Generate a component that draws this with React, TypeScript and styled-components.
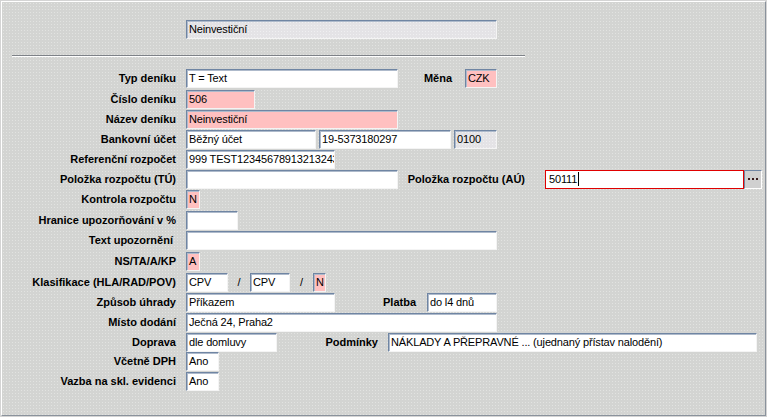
import styled, { createGlobalStyle, css } from 'styled-components';

const GlobalStyle = createGlobalStyle`
  html, body {
    margin: 0;
    padding: 0;
    background: #d4d4d4;
  }
  body {
    font-family: "Liberation Sans", Arial, sans-serif;
    font-size: 11px;
    color: #000;
  }
`;

const dots = css`
  background-color: #d3d4d2;
  background-image: radial-gradient(circle, #e2e3e1 0.7px, transparent 0.8px);
  background-size: 3px 3px;
`;

const Panel = styled.div`
  ${dots};
  margin: 1px;
  width: 765px;
  height: 415px;
  box-sizing: border-box;
  border-top: 1px solid #ffffff;
  border-left: 1px solid #ffffff;
  border-right: 1px solid #8a929c;
  border-bottom: 1px solid #8a929c;
  padding-top: 18px;
`;

const TopRow = styled.div`
  display: flex;
  padding-left: 184px;
`;

const Separator = styled.div`
  margin: 16px 0 12px 10px;
  width: 513px;
  height: 1px;
  background: #7e8288;
  border-bottom: 1px solid #ffffff;
`;

const Row = styled.div<{ $h: number }>`
  display: flex;
  align-items: flex-start;
  height: ${(p) => p.$h}px;
`;

const Label = styled.div`
  width: 174px;
  margin-right: 10px;
  text-align: right;
  font-weight: bold;
  line-height: 19px;
  white-space: nowrap;
`;

const SubLabel = styled.div<{ $w: number; $gap: number }>`
  width: ${(p) => p.$w}px;
  margin-right: ${(p) => p.$gap}px;
  text-align: right;
  font-weight: bold;
  line-height: 19px;
  white-space: nowrap;
`;

type Tone = 'white' | 'pink' | 'gray' | 'error';

const Field = styled.div<{ $w: number; $tone?: Tone }>`
  width: ${(p) => p.$w}px;
  height: 19px;
  box-sizing: border-box;
  padding-left: 2px;
  line-height: 17px;
  letter-spacing: -0.15px;
  white-space: nowrap;
  overflow: hidden;
  flex-shrink: 0;
  border-top: 1px solid #6f85a3;
  border-left: 1px solid #6f85a3;
  border-right: 1px solid #f4f4f4;
  border-bottom: 1px solid #f4f4f4;
  box-shadow: inset 1px 1px 0 #aebacb;
  background: #ffffff;
  ${(p) =>
    p.$tone === 'pink' &&
    css`
      background: #ffc0c0;
    `}
  ${(p) =>
    p.$tone === 'gray' &&
    css`
      background-color: #e4e3e6;
      background-image: radial-gradient(circle, #efeff1 0.7px, transparent 0.8px);
      background-size: 3px 3px;
    `}
  ${(p) =>
    p.$tone === 'error' &&
    css`
      border: 1px solid #e00000;
      box-shadow: none;
      padding-left: 3px;
    `}
`;

const Gap = styled.div<{ $w: number }>`
  width: ${(p) => p.$w}px;
  flex-shrink: 0;
`;

const Slash = styled.div<{ $w: number }>`
  width: ${(p) => p.$w}px;
  text-align: center;
  line-height: 19px;
`;

const Caret = styled.span`
  display: inline-block;
  width: 1px;
  height: 14px;
  background: #000;
  vertical-align: -3px;
  margin-left: 1px;
`;

const PickButton = styled.div`
  width: 18px;
  height: 19px;
  box-sizing: border-box;
  display: flex;
  align-items: center;
  justify-content: center;
  background: #d0d0d0;
  border-top: 1px solid #6f85a3;
  border-left: 1px solid #6f85a3;
  border-right: 1px solid #ffffff;
  border-bottom: 1px solid #ffffff;
`;

function Dots() {
  return (
    <svg width="10" height="3" viewBox="0 0 10 3">
      <rect x="0" y="0" width="2" height="2" fill="#3a1c1c" />
      <rect x="4" y="0" width="2" height="2" fill="#3a1c1c" />
      <rect x="8" y="0" width="2" height="2" fill="#3a1c1c" />
    </svg>
  );
}

export default function App() {
  return (
    <>
      <GlobalStyle />
      <Panel>
        <TopRow>
          <Field $w={311} $tone="gray">Neinvestiční</Field>
        </TopRow>
        <Separator />

        <Row $h={21}>
          <Label>Typ deníku</Label>
          <Field $w={212}>T = Text</Field>
          <SubLabel $w={54} $gap={13}>Měna</SubLabel>
          <Field $w={32} $tone="pink">CZK</Field>
        </Row>
        <Row $h={20}>
          <Label>Číslo deníku</Label>
          <Field $w={69} $tone="pink">506</Field>
        </Row>
        <Row $h={20}>
          <Label>Název deníku</Label>
          <Field $w={212} $tone="pink">Neinvestiční</Field>
        </Row>
        <Row $h={20}>
          <Label>Bankovní účet</Label>
          <Field $w={130}>Běžný účet</Field>
          <Gap $w={3} />
          <Field $w={132}>19-5373180297</Field>
          <Gap $w={3} />
          <Field $w={43} $tone="gray">0100</Field>
        </Row>
        <Row $h={20}>
          <Label>Referenční rozpočet</Label>
          <Field $w={149}>999 TEST12345678913213243</Field>
        </Row>
        <Row $h={20}>
          <Label>Položka rozpočtu (TÚ)</Label>
          <Field $w={212} />
          <SubLabel $w={127} $gap={20}>Položka rozpočtu (AÚ)</SubLabel>
          <Field $w={199} $tone="error">
            50111
            <Caret />
          </Field>
          <PickButton>
            <Dots />
          </PickButton>
        </Row>
        <Row $h={21}>
          <Label>Kontrola rozpočtu</Label>
          <Field $w={14} $tone="pink">N</Field>
        </Row>
        <Row $h={20}>
          <Label>Hranice upozorňování v %</Label>
          <Field $w={52} />
        </Row>
        <Row $h={21}>
          <Label>Text upozornění&nbsp;</Label>
          <Field $w={311} />
        </Row>
        <Row $h={21}>
          <Label>NS/TA/A/KP</Label>
          <Field $w={14} $tone="pink">A</Field>
        </Row>
        <Row $h={20}>
          <Label>Klasifikace (HLA/RAD/POV)</Label>
          <Field $w={42}>CPV</Field>
          <Slash $w={22}>/</Slash>
          <Field $w={40}>CPV</Field>
          <Slash $w={23}>/</Slash>
          <Field $w={13} $tone="pink">N</Field>
        </Row>
        <Row $h={20}>
          <Label>Způsob úhrady</Label>
          <Field $w={149}>Příkazem</Field>
          <SubLabel $w={81} $gap={11}>Platba</SubLabel>
          <Field $w={70}>do l4 dnů</Field>
        </Row>
        <Row $h={20}>
          <Label>Místo dodání</Label>
          <Field $w={311}>Ječná 24, Praha2</Field>
        </Row>
        <Row $h={19}>
          <Label>Doprava</Label>
          <Field $w={91}>dle domluvy</Field>
          <SubLabel $w={101} $gap={10}>Podmínky</SubLabel>
          <Field $w={369}>NÁKLADY A PŘEPRAVNÉ ... (ujednaný přístav nalodění)</Field>
        </Row>
        <Row $h={20}>
          <Label>Včetně DPH</Label>
          <Field $w={33}>Ano</Field>
        </Row>
        <Row $h={20}>
          <Label>Vazba na skl. evidenci</Label>
          <Field $w={33}>Ano</Field>
        </Row>
      </Panel>
    </>
  );
}
